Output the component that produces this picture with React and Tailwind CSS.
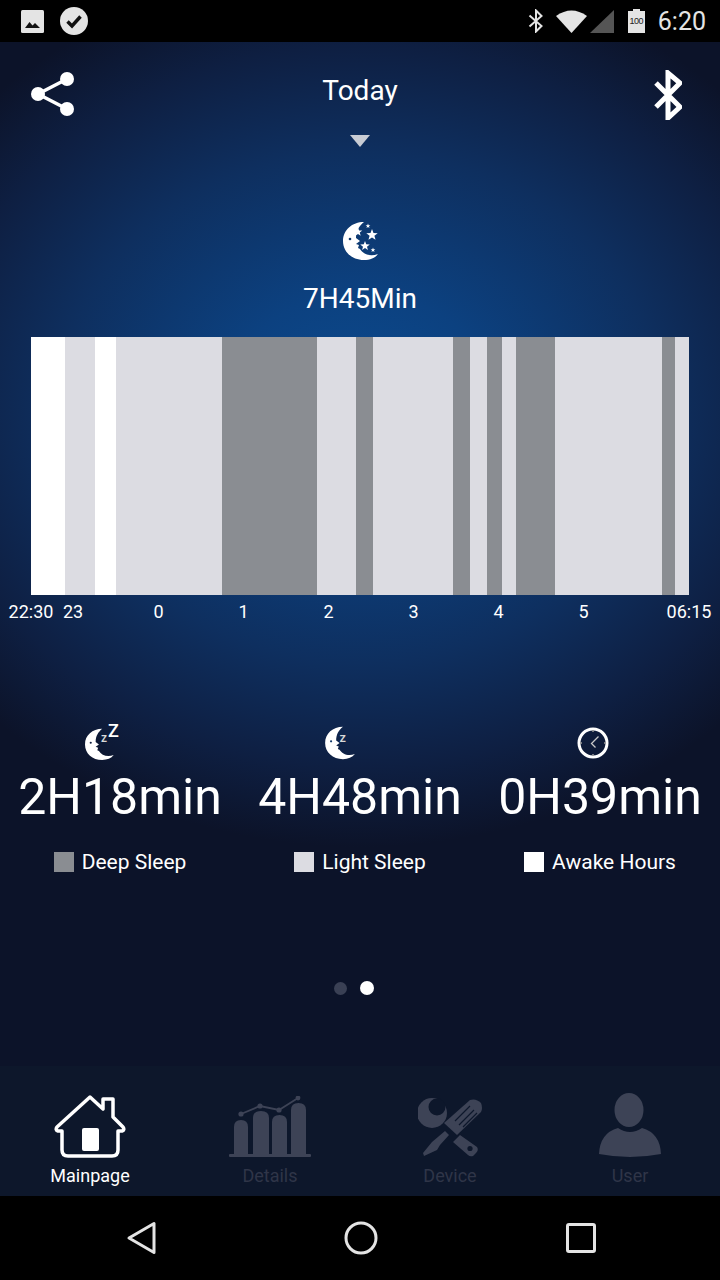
import React from 'react';

const DEEP = 'bg-[#8a8d92]';
const LIGHT = 'bg-[#dcdce2]';
const AWAKE = 'bg-white';

// sleep stages, left to right, width in px
const segments = [
  { w: 'w-[34px]', c: AWAKE },
  { w: 'w-[30px]', c: LIGHT },
  { w: 'w-[21px]', c: AWAKE },
  { w: 'w-[106px]', c: LIGHT },
  { w: 'w-[95px]', c: DEEP },
  { w: 'w-[39px]', c: LIGHT },
  { w: 'w-[17px]', c: DEEP },
  { w: 'w-[80px]', c: LIGHT },
  { w: 'w-[17px]', c: DEEP },
  { w: 'w-[17px]', c: LIGHT },
  { w: 'w-[15px]', c: DEEP },
  { w: 'w-[14px]', c: LIGHT },
  { w: 'w-[39px]', c: DEEP },
  { w: 'w-[107px]', c: LIGHT },
  { w: 'w-[13px]', c: DEEP },
  { w: 'w-[14px]', c: LIGHT },
];

const MOON =
  'M21 1C9 1 0 9 0 20C0 31 9 39 21 39C27 39 32 37 35 33C27 36 20 33 17 28L15 27L16 24L13 23L17 20L13 17C13 10 16 5 21 1Z';

function Moon({ className, children, viewBox = '0 0 35 40' }) {
  return (
    <svg viewBox={viewBox} className={className}>
      <path d={MOON} fill="white" />
      <circle cx="7" cy="18" r="1.3" fill="#0d3566" />
      {children}
    </svg>
  );
}

function Star({ x, y, r }) {
  const pts = [];
  for (let i = 0; i < 10; i++) {
    const a = (Math.PI / 5) * i - Math.PI / 2;
    const d = i % 2 === 0 ? r : r * 0.42;
    pts.push(`${x + d * Math.cos(a)},${y + d * Math.sin(a)}`);
  }
  return <polygon points={pts.join(' ')} fill="white" />;
}

function StatusBar() {
  return (
    <div className="h-[42px] bg-black flex items-center shrink-0 pl-[21px] pr-[14px]">
      <svg width="23" height="23" viewBox="0 0 23 23">
        <rect width="23" height="23" rx="1.5" fill="#e4e4e4" />
        <path d="M4 18L8.5 12L11.5 15.5L14 13L19 18Z" fill="#111" />
      </svg>
      <svg width="28" height="28" viewBox="0 0 28 28" className="ml-[16px]">
        <circle cx="14" cy="14" r="14" fill="#e4e4e4" />
        <path d="M7.5 14.5L12 19L20.5 9.5" fill="none" stroke="#111" strokeWidth="3.4" />
      </svg>
      <svg width="16" height="24" viewBox="0 0 16 24" className="ml-auto">
        <path d="M1.5 6.5L13.5 17L8 22.5V1.5L13.5 7L1.5 17.5" fill="none" stroke="#e4e4e4" strokeWidth="2" />
      </svg>
      <svg width="31" height="23" viewBox="0 0 31 23" className="ml-[12px]">
        <path d="M0 6Q15.5 -5 31 6L15.5 23Z" fill="#e4e4e4" />
      </svg>
      <svg width="24" height="23" viewBox="0 0 24 23" className="ml-[3px]">
        <path d="M0 23L24 0V23Z" fill="#555" />
      </svg>
      <div className="ml-[14px] w-[17px] h-[24px] flex flex-col items-center">
        <div className="w-[7px] h-[2px] bg-[#e4e4e4]" />
        <div className="w-[17px] h-[22px] bg-[#e4e4e4] text-[#222] text-[9px] leading-[20px] text-center font-['Liberation_Sans',sans-serif] tracking-[-0.5px]">
          100
        </div>
      </div>
      <span className="ml-[13px] text-[25px] leading-none text-[#e4e4e4]">6:20</span>
    </div>
  );
}

function Header() {
  return (
    <div className="flex justify-between items-start pt-[31px] pl-[31px] pr-[38px]">
      <div className="w-[67px] shrink-0 -mt-[1px]">
        <svg width="44" height="44" viewBox="0 0 44 44">
          <path d="M36 7L7 22L36 37" fill="none" stroke="white" strokeWidth="3.5" />
          <circle cx="7" cy="22" r="7" fill="white" />
          <circle cx="36" cy="7" r="7" fill="white" />
          <circle cx="36" cy="37" r="7" fill="white" />
        </svg>
      </div>
      <div className="flex flex-col items-center">
        <span className="text-[28px] leading-[36px] text-white">Today</span>
        <div className="mt-[26px] w-0 h-0 border-l-[10px] border-r-[10px] border-t-[12px] border-l-transparent border-r-transparent border-t-[#c8ccd4]" />
      </div>
      <div className="w-[60px] flex justify-end shrink-0 -mt-[3px]">
        <svg width="28" height="50" viewBox="0 0 28 50">
          <path d="M2 13L26 37L14 48V3L26 13L2 37" fill="none" stroke="white" strokeWidth="5" />
        </svg>
      </div>
    </div>
  );
}

function Chart() {
  return (
    <div>
      <div className="flex h-[258px] mx-[31px]">
        {segments.map((s, i) => (
          <div key={i} className={`${s.w} ${s.c}`} />
        ))}
      </div>
      <div className="flex text-[18px] leading-[22px] text-white text-center mt-[6px]">
        <span className="w-[62px]">22:30</span>
        <span className="w-[22px]">23</span>
        <span className="w-[85px] ml-[32px]">0</span>
        <span className="w-[85px]">1</span>
        <span className="w-[85px]">2</span>
        <span className="w-[85px]">3</span>
        <span className="w-[85px]">4</span>
        <span className="w-[85px]">5</span>
        <span className="w-[62px] ml-[32px]">06:15</span>
      </div>
    </div>
  );
}

function Metric({ icon, value, swatch, label }) {
  return (
    <div className="w-[240px] flex flex-col items-center">
      <div className="h-[38px] flex items-end justify-center">{icon}</div>
      <div className="text-[50px] leading-[58px] text-white mt-[7px]">{value}</div>
      <div className="flex items-center gap-[8px] mt-[24px]">
        <div className={`w-[20px] h-[20px] ${swatch}`} />
        <span className="text-[21px] leading-[24px] text-white">{label}</span>
      </div>
    </div>
  );
}

function Metrics() {
  return (
    <div className="flex mt-[100px]">
      <Metric
        value="2H18min"
        swatch={DEEP}
        label="Deep Sleep"
        icon={
          <svg viewBox="0 0 35 36" className="w-[35px] h-[36px] mr-[36px] overflow-visible">
            <g transform="translate(0 3) scale(0.82)">
              <path d={MOON} fill="white" />
              <circle cx="7" cy="18" r="1.3" fill="#0d1c3c" />
            </g>
            <text x="16" y="17" fontSize="12" fill="#d8d8d8" fontWeight="500">z</text>
            <text x="23" y="12" fontSize="18" fill="white" fontWeight="500">Z</text>
          </svg>
        }
      />
      <Metric
        value="4H48min"
        swatch={LIGHT}
        label="Light Sleep"
        icon={
          <Moon viewBox="0 0 35 40" className="w-[30px] h-[34px] mb-[1px] mr-[40px]">
            <text x="17" y="19" fontSize="15" fill="#d8d8d8" fontWeight="500">z</text>
          </Moon>
        }
      />
      <Metric
        value="0H39min"
        swatch={AWAKE}
        label="Awake Hours"
        icon={
          <svg width="32" height="32" viewBox="0 0 32 32" className="mb-[2px] mr-[15px]">
            <circle cx="16" cy="16" r="14" fill="none" stroke="white" strokeWidth="3" />
            <path d="M21.5 9.5L14.5 16.5L18.5 20.5" fill="none" stroke="#c8c8c8" strokeWidth="1.3" />
            <path d="M16 3V5M16 27V29M3 16H5M27 16H29" stroke="#999" strokeWidth="1.5" />
          </svg>
        }
      />
    </div>
  );
}

function BottomNav() {
  const idle = '#3d4356';
  const bg = '#0d172b';
  return (
    <div className="h-[130px] bg-[#0d172b] flex shrink-0">
      <div className="w-[180px] flex flex-col items-center">
        <svg width="72" height="63" viewBox="0 0 72 63" className="mt-[29px]">
          <path
            d="M36 2L49 14V4H59V22L69 32Q71 35 68 36L64 36V55Q64 61 58 61H14Q8 61 8 55V36H4Q1 35 3 32Z"
            fill="none"
            stroke="white"
            strokeWidth="3.5"
            strokeLinejoin="round"
          />
          <rect x="28" y="33" width="17" height="23" rx="2" fill="white" />
        </svg>
        <span className="text-[18px] leading-[24px] text-white mt-[6px]">Mainpage</span>
      </div>
      <div className="w-[180px] flex flex-col items-center">
        <svg width="82" height="62" viewBox="0 0 82 62" className="mt-[30px]">
          <path d="M5 58V31Q5 24 12 24Q19 24 19 31V58Z M24 58V22Q24 15 32 15Q40 15 40 22V58Z M43 58V26Q43 19 50.5 19Q58 19 58 26V58Z M62 58V14Q62 7 69.5 7Q77 7 77 14V58Z" fill={idle} />
          <rect y="58" width="82" height="3" rx="1" fill={idle} />
          <path d="M12 18L31 10L50 14L69 2" fill="none" stroke={idle} strokeWidth="1.8" />
          <circle cx="12" cy="18" r="2.6" fill={idle} />
          <circle cx="31" cy="10" r="2.6" fill={idle} />
          <circle cx="50" cy="14" r="2.6" fill={idle} />
          <circle cx="69" cy="2" r="2.4" fill={idle} />
        </svg>
        <span className="text-[18px] leading-[24px] text-[#2f3548] mt-[6px]">Details</span>
      </div>
      <div className="w-[180px] flex flex-col items-center">
        <svg width="64" height="60" viewBox="0 0 64 60" className="mt-[32px]">
          {/* wrench head */}
          <circle cx="14" cy="15" r="15" fill={idle} />
          <circle cx="19" cy="9" r="8.5" fill={bg} />
          {/* wrench handle end */}
          <path d="M35 44L42 37L59 49Q61 52 58 55L55 58Q52 59 50 57Z" fill={idle} />
          <circle cx="52" cy="50.5" r="2.6" fill={bg} />
          {/* screwdriver */}
          <path d="M26 25L52 2Q58 0 63 5Q65 10 63 14L39 37Z" fill={idle} />
          <path d="M27 33L31 37L22 47L19 52L6 58L5 55L14 44Z" fill={idle} />
          <path d="M37 23L52 8M41 27L56 12M45 29L59 15" stroke={bg} strokeWidth="1.2" />
        </svg>
        <span className="text-[18px] leading-[24px] text-[#2f3548] mt-[6px]">Device</span>
      </div>
      <div className="w-[180px] flex flex-col items-center">
        <svg width="64" height="65" viewBox="0 0 64 65" className="mt-[27px]">
          <ellipse cx="31" cy="17" rx="14.5" ry="17" fill={idle} />
          <path d="M20 35Q32 43 44 35Q62 40 63 61Q32 67 1 61Q2 40 20 35Z" fill={idle} />
        </svg>
        <span className="text-[18px] leading-[24px] text-[#2f3548] mt-[6px]">User</span>
      </div>
    </div>
  );
}

function SystemNav() {
  return (
    <div className="h-[84px] bg-black flex items-center shrink-0 pl-[126px] pr-[124px] justify-between">
      <svg width="30" height="34" viewBox="0 0 30 34">
        <path d="M28 2.5V31.5L3 17Z" fill="none" stroke="#e4e4e4" strokeWidth="3" strokeLinejoin="round" />
      </svg>
      <svg width="34" height="34" viewBox="0 0 34 34">
        <circle cx="17" cy="17" r="15" fill="none" stroke="#e4e4e4" strokeWidth="3" />
      </svg>
      <svg width="30" height="30" viewBox="0 0 30 30">
        <rect x="1.5" y="1.5" width="27" height="27" rx="1.5" fill="none" stroke="#e4e4e4" strokeWidth="3" />
      </svg>
    </div>
  );
}

export default function App() {
  return (
    <div className="w-[720px] h-[1280px] flex flex-col overflow-hidden font-['Roboto',sans-serif] bg-[#0c1329]">
      <StatusBar />
      <main className="flex-1 flex flex-col bg-[radial-gradient(ellipse_520px_440px_at_360px_365px,#0b4b8f_0%,#0c4180_26%,#0e2f5f_58%,#0e1f42_82%,#0c1329_100%)]">
        <Header />
        <div className="flex justify-center mt-[74px]">
          <Moon className="w-[35px] h-[40px]">
            <Star x={15} y={11} r={4.5} />
            <Star x={29} y={14} r={6} />
            <Star x={22} y={25} r={5} />
            <Star x={25} y={5} r={2.5} />
            <Star x={30} y={29} r={2.5} />
          </Moon>
        </div>
        <div className="text-[28px] leading-[36px] text-white text-center mt-[20px]">7H45Min</div>
        <div className="mt-[20px]">
          <Chart />
        </div>
        <Metrics />
        <div className="flex justify-center items-center gap-[13px] mt-[107px]">
          <div className="w-[13px] h-[13px] rounded-full bg-[#3a4054] ml-[-12px]" />
          <div className="w-[14px] h-[14px] rounded-full bg-white" />
        </div>
      </main>
      <BottomNav />
      <SystemNav />
    </div>
  );
}
